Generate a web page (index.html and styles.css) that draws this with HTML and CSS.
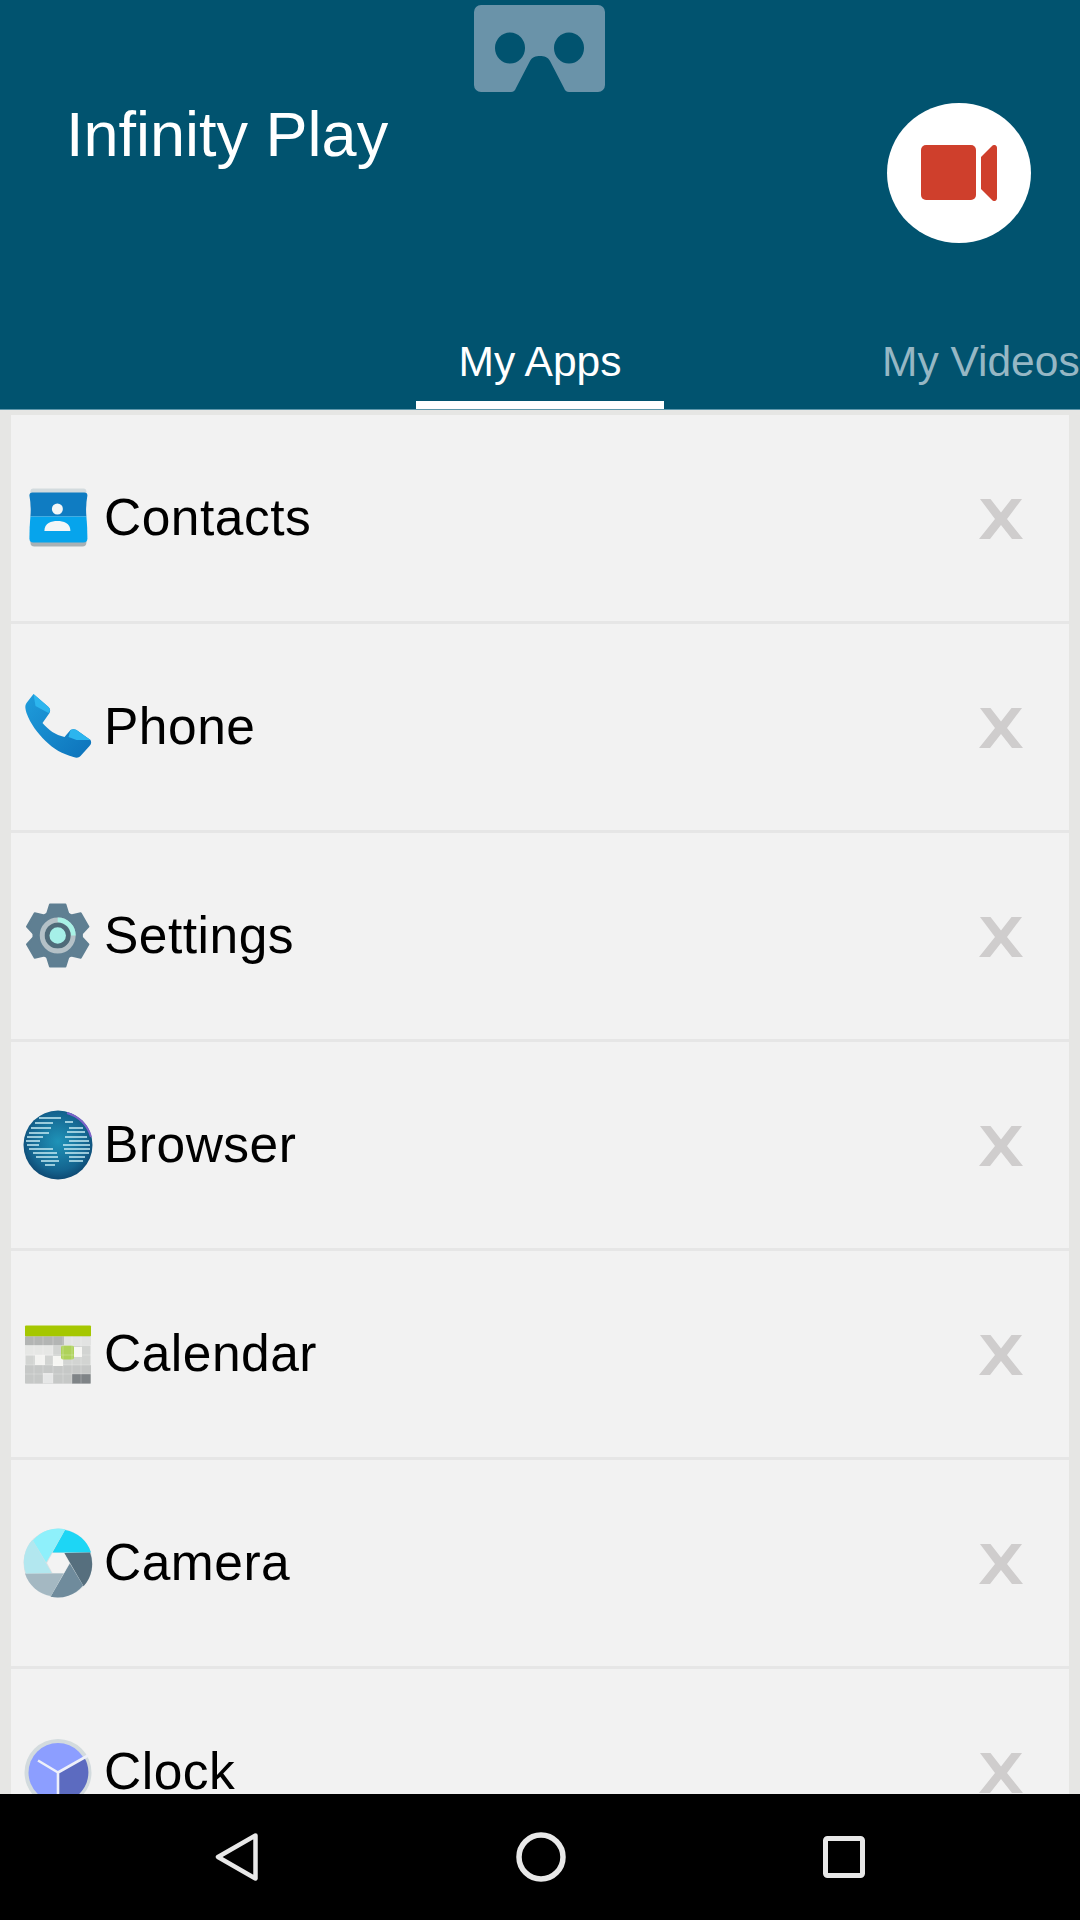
FILE: index.html
```html
<!DOCTYPE html>
<html lang="en">
<head>
<meta charset="utf-8">
<title>Infinity Play</title>
<link rel="stylesheet" href="styles.css">
</head>
<body>
<header class="header">
  <div class="header-top">
    <h1 class="title">Infinity Play</h1>
    <svg class="vr" viewBox="0 0 131 87"><path fill="#6a93a9" d="M7 0H124a7 7 0 0 1 7 7V80a7 7 0 0 1-7 7H96a6 6 0 0 1-6-4L76 56c-2-4-6-5-10-5s-8 1-10 5L42 83a6 6 0 0 1-6 4H7a7 7 0 0 1-7-7V7a7 7 0 0 1 7-7z"/><ellipse cx="36" cy="43" rx="15" ry="15.500" fill="#01536f"/><ellipse cx="95" cy="43" rx="15" ry="15.500" fill="#01536f"/></svg>
    <button class="record" type="button" aria-label="Record">
      <svg class="record-icon" viewBox="0 0 76 56"><rect x="0" y="0" width="55" height="55" rx="5" fill="#cf3f2c"/><path fill="#cf3f2c" d="M60 12 71 1c2-2 5-1 5 2V53c0 3-3 4-5 2L60 44z"/></svg>
    </button>
  </div>
  <nav class="tabs">
    <span class="tab tab-active">My Apps</span>
    <span class="tab">My Videos</span>
  </nav>
</header>
<main class="content">
  <ul class="list">
    <li class="row">
      <svg class="app-icon" viewBox="0 0 70 70"><g transform="translate(-.6 0)"><rect x="8" y="5.500" width="56" height="20" rx="3" fill="#d3dbde"/><rect x="8" y="45" width="56" height="18.500" rx="4" fill="#a8b1b5"/><path fill="#0f7cc2" d="M10 9.500H62q3 0 3 3-2 10-1 21H8q1-11-1-21 0-3 3-3z"/><path fill="#06a4ec" d="M8 33.500H64q1 10 1 22 0 4-4 4H11q-4 0-4-4 0-12 1-22z"/><circle cx="35" cy="26" r="5.500" fill="#f4f6f7"/><path fill="#f4f6f7" d="M22 48c0-8 7-10 13-10s13 2 13 10z"/></g></svg>
      <span class="app-name">Contacts</span>
      <svg class="remove" viewBox="0 0 44 40"><path fill="#cfcdcd" d="M1 0H11.500L22 13.500 32.500 0H43L28 20 44 40H33L22 26 11 40H0L16 20z"/></svg>
    </li>
    <li class="row">
      <svg class="app-icon" viewBox="0 0 70 70"><defs><linearGradient id="ph" x1="0" y1="0" x2="1" y2="1"><stop offset="0" stop-color="#1f9ddc"/><stop offset="1" stop-color="#0d72ba"/></linearGradient></defs><g transform="translate(-1.500 0)"><path fill="url(#ph)" d="M12 2 27 15c2 2 2 4 1 6l-7 10c6 7 13 12 22 14l6-7c2-1 4-1 6 0l14 10c1 2 1 4-1 6l-9 10c-2 2-4 2-7 1-11-3-20-8-28-16C16 41 9 32 5 21c-1-4-2-7 0-10z"/><path fill="#2cb5ee" d="M12 2 27 15c2 2 2 4 0 6L14 14z M49 38c2-1 4-1 6 0l14 10-14 0-8-3z"/></g></svg>
      <span class="app-name">Phone</span>
      <svg class="remove" viewBox="0 0 44 40"><path fill="#cfcdcd" d="M1 0H11.500L22 13.500 32.500 0H43L28 20 44 40H33L22 26 11 40H0L16 20z"/></svg>
    </li>
    <li class="row">
      <svg class="app-icon" viewBox="0 0 70 70"><g transform="translate(-.3 .5) translate(35 34) scale(.97) translate(-35 -34)"><g fill="#5f7f92" stroke="#5f7f92" stroke-width="2" stroke-linejoin="round"><circle cx="35" cy="34" r="25"/><path d="M27 2H43L47 15H23z"/><path d="M27 2H43L47 15H23z" transform="rotate(60 35 34)"/><path d="M27 2H43L47 15H23z" transform="rotate(120 35 34)"/><path d="M27 2H43L47 15H23z" transform="rotate(180 35 34)"/><path d="M27 2H43L47 15H23z" transform="rotate(240 35 34)"/><path d="M27 2H43L47 15H23z" transform="rotate(300 35 34)"/></g><circle cx="35" cy="34" r="16" fill="#eef1f1" stroke="#b4c1c7" stroke-width="5"/><path d="M35 18A16 16 0 0 1 51 34" fill="none" stroke="#a8f2e6" stroke-width="5"/><circle cx="35" cy="34" r="11" fill="#a6f0e8" stroke="#4f6b79" stroke-width="5"/></g></svg>
      <span class="app-name">Settings</span>
      <svg class="remove" viewBox="0 0 44 40"><path fill="#cfcdcd" d="M1 0H11.500L22 13.500 32.500 0H43L28 20 44 40H33L22 26 11 40H0L16 20z"/></svg>
    </li>
    <li class="row">
      <svg class="app-icon" viewBox="0 0 70 70"><defs><radialGradient id="gl" cx=".5" cy=".45" r=".6"><stop offset="0" stop-color="#1f93b8"/><stop offset=".7" stop-color="#14648f"/><stop offset="1" stop-color="#0c3f68"/></radialGradient></defs><circle cx="35" cy="35" r="34.500" fill="url(#gl)"/><path d="M44 3a34 34 0 0 1 24 24" stroke="#7d62c9" stroke-width="2" fill="none"/><g stroke="#c6ebf3" stroke-width="1.300"><path d="M16 8h22M12 13h18M8 18h20M6 23h20M4 27h16M3 31h14M4 35h12M6 39h24M10 43h24M13 47h22M18 51h18M22 55h10"/><path d="M42 12h8M46 18h14M44 22h18M42 27h22M46 31h20M40 35h27M41 39h26M42 43h24M46 47h16M46 51h14"/></g></svg>
      <span class="app-name">Browser</span>
      <svg class="remove" viewBox="0 0 44 40"><path fill="#cfcdcd" d="M1 0H11.500L22 13.500 32.500 0H43L28 20 44 40H33L22 26 11 40H0L16 20z"/></svg>
    </li>
    <li class="row">
      <svg class="app-icon" viewBox="0 0 70 70"><g transform="translate(-1 0)"><rect x="3.500" y="8" width="65" height="56.500" rx="1" fill="#d2d4d2"/><rect x="3" y="6.500" width="66" height="11" rx="1" fill="#a5c700"/><rect x="3" y="17.500" width="39" height="9" fill="#b3b5b4"/><rect x="42" y="17.500" width="27" height="9" fill="#e2e3e2"/><rect x="3" y="26.500" width="28" height="10" fill="#e6e7e5"/><rect x="3" y="46" width="66" height="18.500" fill="#c6c8c7"/><rect x="50" y="55" width="18.500" height="9.500" fill="#7f8487"/><rect x="13" y="36" width="10" height="10" fill="#f3f3f1"/><rect x="31" y="37" width="10" height="10" fill="#f6f6f3"/><rect x="21" y="54" width="10" height="10.500" fill="#e6e7e7"/><rect x="52" y="28" width="8" height="10" fill="#f6f6f3"/><rect x="39" y="26.500" width="13" height="14" rx="2" fill="#aed25a"/><g stroke="#fff" stroke-opacity=".3" stroke-width=".8"><path d="M3 26.500h66M3 36h66M3 46h66M3 55h66M12 17.500v47M21 17.500v47M31 17.500v47M41 17.500v47M50 17.500v47M59 17.500v47"/></g></g></svg>
      <span class="app-name">Calendar</span>
      <svg class="remove" viewBox="0 0 44 40"><path fill="#cfcdcd" d="M1 0H11.500L22 13.500 32.500 0H43L28 20 44 40H33L22 26 11 40H0L16 20z"/></svg>
    </li>
    <li class="row">
      <svg class="app-icon" viewBox="0 0 70 70"><circle cx="35" cy="35" r="34.500" fill="#d9e0e3"/><path fill="#1dd6f5" d="M29.500 24.500H68A33 33 0 0 0 42 2z"/><path fill="#566f7e" d="M29.500 24.500H68A33 33 0 0 0 42 2z" transform="rotate(60 35 35)"/><path fill="#6f8b9c" d="M29.500 24.500H68A33 33 0 0 0 42 2z" transform="rotate(120 35 35)"/><path fill="#a4b8c2" d="M29.500 24.500H68A33 33 0 0 0 42 2z" transform="rotate(180 35 35)"/><path fill="#b2e7ef" d="M29.500 24.500H68A33 33 0 0 0 42 2z" transform="rotate(240 35 35)"/><path fill="#8ef0fb" d="M29.500 24.500H68A33 33 0 0 0 42 2z" transform="rotate(300 35 35)"/><path fill="#f3f3f3" d="M29.500 25 41 25 46.500 35 41 45 29.500 45 24 35z"/></svg>
      <span class="app-name">Camera</span>
      <svg class="remove" viewBox="0 0 44 40"><path fill="#cfcdcd" d="M1 0H11.500L22 13.500 32.500 0H43L28 20 44 40H33L22 26 11 40H0L16 20z"/></svg>
    </li>
    <li class="row">
      <svg class="app-icon" viewBox="0 0 70 70"><circle cx="35" cy="35.500" r="33.500" fill="#d3dbde"/><circle cx="35" cy="35.500" r="29.500" fill="#8c9eff"/><path fill="#5c6bc0" d="M35 35.500 61 20a29.500 29.500 0 0 1-26 45z"/><path d="M15 23.500 35 35.500 65 18.500M35 35.500V68" stroke="#eef0f9" stroke-width="2.600" fill="none" stroke-linejoin="round"/></svg>
      <span class="app-name">Clock</span>
      <svg class="remove" viewBox="0 0 44 40"><path fill="#cfcdcd" d="M1 0H11.500L22 13.500 32.500 0H43L28 20 44 40H33L22 26 11 40H0L16 20z"/></svg>
    </li>
  </ul>
</main>
<footer class="navbar">
  <svg class="nav-icon" viewBox="0 0 50 50"><path d="M43.500 3.500 6 25 43.500 46.500z" fill="none" stroke="#e8e8e8" stroke-width="4.500" stroke-linejoin="round"/></svg>
  <svg class="nav-icon" viewBox="0 0 50 50"><circle cx="25" cy="25" r="22" fill="none" stroke="#e8e8e8" stroke-width="5.500"/></svg>
  <svg class="nav-icon" viewBox="0 0 50 50"><rect x="6.500" y="6.500" width="37" height="37" rx="2" fill="none" stroke="#e8e8e8" stroke-width="5"/></svg>
</footer>
</body>
</html>
```
FILE: styles.css
```css
* { box-sizing: border-box; }
html, body { margin: 0; padding: 0; }
body {
  width: 1080px;
  height: 1920px;
  display: flex;
  flex-direction: column;
  overflow: hidden;
  font-family: "Liberation Sans", Arial, sans-serif;
  background: #e6e6e4;
}
.header {
  height: 410px;
  flex: none;
  background: #01536f;
  display: flex;
  flex-direction: column;
  justify-content: space-between;
  border-bottom: 1px solid #5f97ab;
}
.header-top {
  display: grid;
  grid-template-columns: 1fr 131px 1fr;
  align-items: start;
}
.title {
  margin: 98px 0 0 66px;
  font-size: 63px;
  line-height: 72px;
  font-weight: 400;
  white-space: nowrap;
  color: #fff;
}
.vr { width: 131px; height: 87px; margin: 5px 0 0 -1px; }
.record {
  justify-self: end;
  width: 144px;
  height: 140px;
  margin: 103px 49px 0 0;
  padding: 0;
  border: 0;
  border-radius: 50%;
  background: #fff;
  display: flex;
  align-items: center;
  justify-content: center;
}
.record-icon { width: 76px; height: 56px; }
.tabs {
  display: flex;
  padding-left: 416px;
  height: 70px;
  white-space: nowrap;
  overflow: hidden;
}
.tab {
  flex: none;
  font-size: 42.5px;
  line-height: 46px;
  color: #96b7c4;
}
.tab-active {
  width: 248px;
  text-align: center;
  color: #fff;
  border-bottom: 8px solid #fff;
  margin-right: 218px;
}
.content {
  flex: 1;
  min-height: 0;
  overflow: hidden;
  padding: 5px 11px 0;
}
.list {
  margin: 0;
  padding: 0;
  list-style: none;
  background: #f2f2f2;
}
.row {
  height: 209px;
  display: flex;
  align-items: center;
  padding: 0 0 0 12px;
  border-bottom: 3px solid #e6e6e6;
}
.app-icon { width: 70px; height: 70px; flex: none; }
.app-name {
  flex: 1;
  margin: 0 0 2px 11px;
  font-size: 51.5px;
  letter-spacing: .5px;
  color: #000;
}
.remove { width: 44px; height: 40px; margin: 2px 46px 0 0; flex: none; }
.navbar {
  height: 126px;
  flex: none;
  background: #000;
  display: flex;
  align-items: center;
  justify-content: space-between;
  padding: 0 211px 0 212px;
}
.nav-icon { width: 50px; height: 50px; }
```
